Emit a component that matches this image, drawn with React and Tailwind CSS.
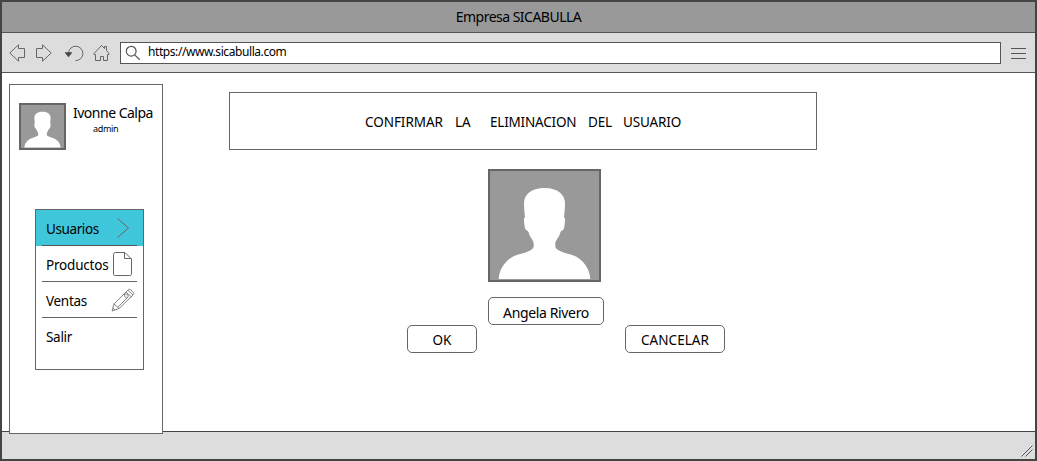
import React from "react";

function Avatar({ className }) {
  return (
    <svg viewBox="2 2 109 109" className={className}>
      <rect width="113" height="113" fill="#999" />
      <path
        fill="#fff"
        d="M56.5 19C43 19 36 25.5 36 34.5C36 40 36.6 44 37 48.3C35.6 49 36 52 36.3 55C36.7 58 37 60.5 38.3 61.2C40 61.8 40.6 63 41.2 65C42.2 69 45.7 71 45.7 75V78C44 82 36 84 28.7 86C17 90 11 101 10.7 110H102.3C102 101 96 90 84.3 86C77 84 69 82 67.3 78V75C67.3 71 70.8 69 71.8 65C72.4 63 73 61.8 74.7 61.2C76 60.5 76.3 58 76.7 55C77 52 77.4 49 76 48.3C76.4 44 77 40 77 34.5C77 25.5 70 19 56.5 19Z"
      />
    </svg>
  );
}

function Icon({ className, viewBox, children }) {
  return (
    <svg viewBox={viewBox} className={className} fill="none" stroke="#666" strokeWidth="1">
      {children}
    </svg>
  );
}

function Toolbar() {
  return (
    <div className="flex h-10 shrink-0 items-start border-b border-[#555] bg-[#ddd] pt-[9px] pl-[7px]">
      <Icon viewBox="0 0 17 18" className="mt-[2px] h-[18px] w-[17px] shrink-0">
        <path d="M.8 9L9.5 .8V4.5H15.5V13.5H9.5V17.2Z" />
      </Icon>
      <Icon viewBox="0 0 17 18" className="mt-[2px] ml-[9px] h-[18px] w-[17px] shrink-0">
        <path d="M16.2 9L7.5 .8V4.5H1.5V13.5H7.5V17.2Z" />
      </Icon>
      <Icon viewBox="0 0 19 18" className="mt-[2px] ml-[13px] h-[18px] w-[19px] shrink-0">
        <path d="M3.5 9A7.2 7.2 0 1 1 10.5 16.6" />
        <path d="M0 8.5H7L3.5 13Z" fill="#444" stroke="#444" strokeWidth=".5" />
      </Icon>
      <Icon viewBox="0 0 17 18" className="mt-[2px] ml-[9px] h-[18px] w-[17px] shrink-0">
        <path d="M1 9.5L8.5 1.5L11.5 4.5V2.5H13.5V6.5L16 9.5V10.5H14.5V16.5H10.5V12.5H7.5V16.5H2.5V10.5H1Z" />
      </Icon>
      <div className="ml-[10px] flex h-[22px] w-[881px] shrink-0 items-start border border-[#555] bg-white pl-[4px]">
        <svg viewBox="0 0 16 18" className="mt-px h-[18px] w-4 shrink-0" fill="none" stroke="#555" strokeWidth="1.2">
          <circle cx="6.2" cy="7.2" r="4.9" />
          <path d="M9.7 10.9L14.7 15.8" />
        </svg>
        <span className="ml-[7px] text-[12px] leading-[18px] tracking-[-0.42px]">https://www.sicabulla.com</span>
      </div>
      <div className="mt-[6px] ml-[10px] flex w-[15px] shrink-0 flex-col gap-1">
        <div className="h-px bg-[#555]" />
        <div className="h-px bg-[#555]" />
        <div className="h-px bg-[#555]" />
      </div>
    </div>
  );
}

function Sidebar() {
  return (
    <aside className="relative z-10 mt-[11px] ml-[7px] h-[350px] w-[154px] shrink-0 border border-[#666] bg-white">
      <div className="flex pt-[18px] pl-[9px]">
        <Avatar className="h-[47px] w-[47px] shrink-0 border-2 border-[#666]" />
        <div className="ml-[7px] whitespace-nowrap">
          <div className="text-[14px] leading-5 tracking-[-0.5px]">Ivonne Calpa</div>
          <div className="pl-[20px] text-[9px] leading-3 tracking-[-0.3px]">admin</div>
        </div>
      </div>
      <nav className="mt-[59px] ml-[25px] h-[161px] w-[109px] border border-[#666] text-[13.5px] tracking-[-0.3px]">
        <div className="h-9 bg-[#40c6da] px-[6px]">
          <div className="flex h-9 items-center justify-between border-b border-[#555] pl-1">
            <span className="pt-[4px] tracking-[-0.4px]">Usuarios</span>
            <Icon viewBox="0 0 14 22" className="mr-[7px] h-[22px] w-[14px]">
              <path d="M1.5 1.5L12.5 11L1.5 20.5" />
            </Icon>
          </div>
        </div>
        <div className="mx-[6px] flex h-9 items-center justify-between border-b border-[#666] pl-1">
          <span className="pt-[4px] tracking-[-0.2px]">Productos</span>
          <Icon viewBox="0 0 19 25" className="mt-[2px] mr-[5px] -ml-[2px] h-[25px] w-[19px] shrink-0">
            <path d="M2.5 .5H12L18.5 7V22.5Q18.5 23.5 16.5 23.5H2.5Q.5 23.5 .5 22.5V2.5Q.5 .5 2.5 .5ZM11.5 .5V6.5H18.5" />
          </Icon>
        </div>
        <div className="mx-[6px] flex h-9 items-center justify-between border-b border-[#666] pl-1">
          <span className="pt-[4px]">Ventas</span>
          <Icon viewBox="0 0 24 24" className="mr-[2px] h-6 w-6 shrink-0">
            <path d="M1 23L3 16L17 2Q18.5 .5 20 2L22 4Q23.5 5.5 22 7L8 20.5ZM3 16L8 20.5M1.8 20L4 22M15 4L20.5 9M17 2.3L22 7M7 19L16.5 9.5M13.5 6Q16 5.5 17 7Q18 9 15.5 10Q13 9 13.5 6" strokeWidth=".8" />
          </Icon>
        </div>
        <div className="mx-[6px] flex h-9 items-center pl-1">
          <span className="pt-[3px]">Salir</span>
        </div>
      </nav>
    </aside>
  );
}

export default function App() {
  return (
    <div className="flex h-[461px] w-[1037px] flex-col overflow-hidden border-2 border-[#444] bg-white font-['Noto_Sans','Open_Sans',sans-serif] text-black">
      <header className="h-[31px] shrink-0 border-b border-[#555] bg-[#999] text-center text-[14px] leading-[30px] tracking-[-0.52px]">
        Empresa SICABULLA
      </header>
      <Toolbar />
      <div className="flex h-[358px] shrink-0">
        <Sidebar />
        <main className="ml-[66px] flex w-[588px] flex-col pt-[19px]">
          <h1 className="flex h-[58px] items-center border border-[#666] pl-[135px] text-[13.5px] tracking-[-0.15px]">
            <span className="w-[90px] pt-[3px] tracking-[-0.05px]">CONFIRMAR</span>
            <span className="w-[35px] pt-[3px]">LA</span>
            <span className="w-[98px] pt-[3px] tracking-[-0.2px]">ELIMINACION</span>
            <span className="w-[35px] pt-[3px]">DEL</span>
            <span className="pt-[3px]">USUARIO</span>
          </h1>
          <Avatar className="mt-[19px] ml-[259px] h-[113px] w-[113px] shrink-0 border-2 border-[#666]" />
          <div className="mt-[15px] ml-[259px] flex h-7 w-[116px] items-center justify-center rounded-[5px] border border-[#666] pt-[2px] text-[14px] tracking-[-0.36px]">
            Angela Rivero
          </div>
          <div className="ml-[178px] flex gap-[148px] text-[13.5px] tracking-[0.05px]">
            <button className="h-7 w-[70px] rounded-[5px] border border-[#666] pt-[2px]">OK</button>
            <button className="h-7 w-[100px] rounded-[5px] border border-[#666] pt-[2px]">CANCELAR</button>
          </div>
        </main>
      </div>
      <footer className="flex grow items-end justify-end border-t border-[#444] bg-[#ddd] pr-[2px] pb-[2px]">
        <Icon viewBox="0 0 12 12" className="h-3 w-3">
          <path d="M.5 11.5L11.5 .5M4.5 11.5L11.5 4.5" stroke="#555" />
        </Icon>
      </footer>
    </div>
  );
}
